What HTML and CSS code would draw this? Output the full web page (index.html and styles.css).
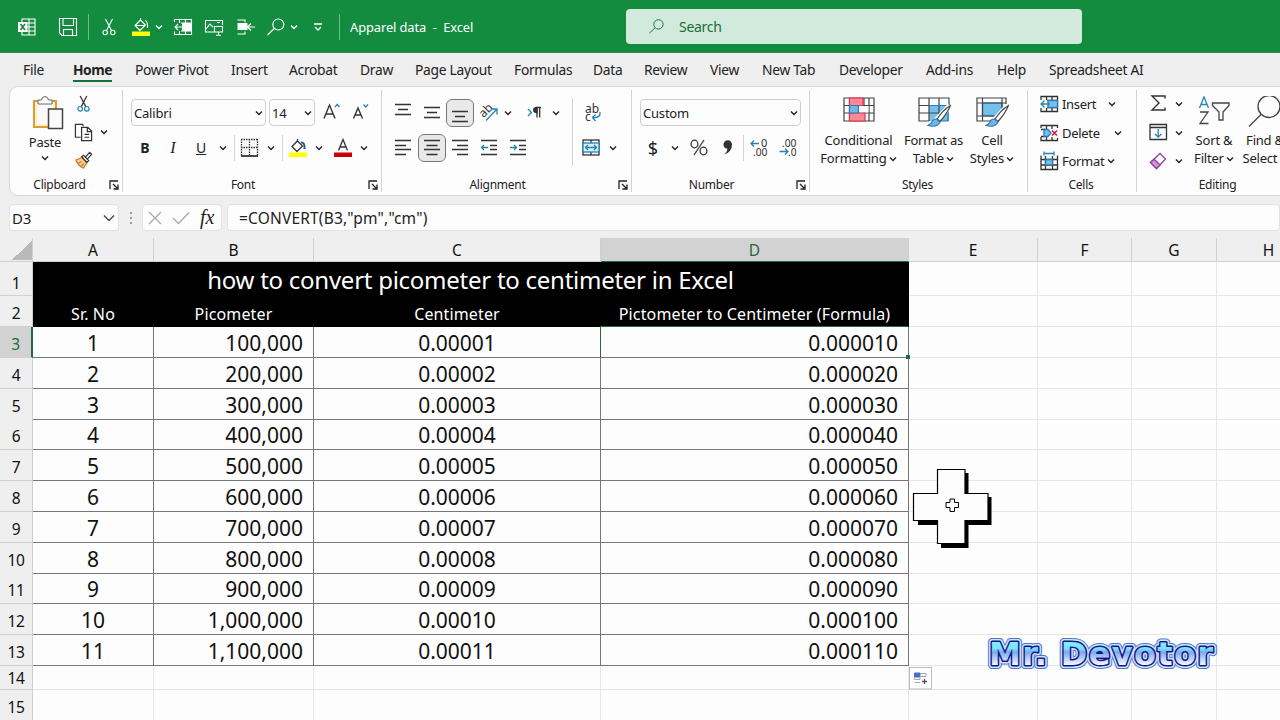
FILE: index.html
```html
<!DOCTYPE html>
<html lang="en">
<head>
    <meta charset="UTF-8">
    <meta name="viewport" content="width=device-width, initial-scale=1.0">
    <title>Apparel data - Excel</title>
    <link rel="stylesheet" href="styles.css">
</head>
<body>
    <svg class="symbols" width="0" height="0">
        <symbol id="chev" viewBox="0 0 8 8"><path d="M1 2.5 4 5.5 7 2.5" fill="none" stroke="currentColor" stroke-width="1.4"/></symbol>
        <symbol id="launch" viewBox="0 0 10 10"><path d="M1 9V1H9M4 4 8.5 8.5M9 4.500V9H4.500" fill="none" stroke="currentColor" stroke-width="1.3"/></symbol>
        <symbol id="lens" viewBox="0 0 20 20"><circle cx="12.300" cy="7.500" r="5.500"/><path d="M8.300 11.500 1.500 18"/></symbol>
    </svg>

    <div class="titlebar">
        <div class="quick">
            <svg class="icon" viewBox="0 0 20 20"><path d="M5 5V2H18V18H5V15M5 6H18M5 10H18M5 14H18M12 2V18"/><rect x="1" y="5" width="9.500" height="10" fill="#fff" stroke="none"/><path d="M3.500 7 8 13M8 7 3.500 13" stroke="#148c3f" stroke-width="1.700"/></svg>
            <svg class="icon" viewBox="0 0 20 20"><path d="M1.500 1.500H18.500V18.500H4L1.500 16ZM5 1.500V8.500H15.500V1.500M5.500 18V12.500H14.500V18"/></svg>
            <i class="line"></i>
            <svg class="icon" viewBox="0 0 20 20"><path d="M6.500 2 12.500 13.500M13.500 2 7.500 13.500"/><circle cx="6.200" cy="15.500" r="2.200"/><circle cx="13.800" cy="15.500" r="2.200"/></svg>
            <svg class="icon" viewBox="0 0 20 20"><path d="M4 8.500 9.500 3 14.500 8 9 13.500ZM9.500 3V1M4 8.500H14M14 3.500Q17 4 16.500 11"/><rect x="1" y="14.500" width="18" height="4.500" fill="#ff0" stroke="none"/></svg>
            <svg class="chev"><use href="#chev"/></svg>
            <svg class="icon" viewBox="0 0 20 20"><path d="M1.500 5V2.500H18.500V17.500H1.500V14.500M6.500 2.500V6M12.500 2.500V6M6.500 14V17.500M12.500 14V17.500M8 6H18M8 14H18M2 10H10M5 7 2 10 5 13"/><rect x="9" y="6" width="9" height="8" fill="#fff" stroke="none"/></svg>
            <svg class="icon" viewBox="0 0 20 20"><path d="M10 15H1.500V3.500H18.500V8M2 12 6 7 9 10M13 5.500H16M10.500 9.500H18.500V15H10.500ZM14.500 15V18M12 18.300H17"/></svg>
            <svg class="icon" viewBox="0 0 20 20"><path d="M1.500 3H9V5.500M1.500 17H9V14.500M12 10H19M15 6.500 11.500 10 15 13.500"/><rect x="1.500" y="6" width="10" height="7" fill="#fff" stroke="none"/></svg>
            <svg class="icon"><use href="#lens"/></svg>
            <svg class="chev"><use href="#chev"/></svg>
            <svg class="chev" viewBox="0 0 8 8"><path d="M0 1H8M1 4 4 7 7 4" fill="none" stroke="currentColor" stroke-width="1.300"/></svg>
            <i class="line"></i>
            <span class="doc">Apparel data&nbsp; -&nbsp; Excel</span>
        </div>
        <div class="search">
            <svg class="icon"><use href="#lens"/></svg>
            <span>Search</span>
        </div>
    </div>

    <div class="tabs">
        <span>File</span><span class="active">Home</span><span>Power Pivot</span><span>Insert</span><span>Acrobat</span><span>Draw</span><span>Page Layout</span><span>Formulas</span><span>Data</span><span>Review</span><span>View</span><span>New Tab</span><span>Developer</span><span>Add-ins</span><span>Help</span><span>Spreadsheet AI</span>
    </div>

    <div class="ribbon">
        <div class="group clipboard">
            <div class="body">
                <div class="paste">
                    <svg width="32" height="36" viewBox="0 0 32 36" fill="none">
                        <path d="M2 6H24V32H2Z" fill="#fdf0c4" stroke="#e09a35" stroke-width="2"/>
                        <path d="M5 8H21V29H5Z" fill="#fafafa"/>
                        <path d="M6 9V5H9.500Q10 1.500 13 1.500T16.500 5H20V9Z" fill="#fff" stroke="#666"/>
                        <rect x="16.500" y="14" width="14" height="19.500" fill="#fafafa" stroke="#444" stroke-width="1.500"/>
                    </svg>
                    <span>Paste</span>
                    <svg class="chev"><use href="#chev"/></svg>
                </div>
                <div class="clip-tools">
                    <svg class="icon" viewBox="0 0 20 20"><path d="M6.500 1 12.500 12.500M13.500 1 7.500 12.500"/><g class="blue"><circle cx="6.500" cy="14.500" r="2.400"/><circle cx="13.500" cy="14.500" r="2.400"/></g></svg>
                    <span></span>
                    <svg class="icon" viewBox="0 0 20 20"><path d="M7 15H1.500V1.500H9L10 3M8 4.500H14.500L18.500 8.500V18.500H8ZM14 5V9H18M11 12H16M11 15H16"/></svg>
                    <svg class="chev"><use href="#chev"/></svg>
                    <svg class="icon" viewBox="0 0 20 20"><path d="M2 9.500 8 7 13.500 12.500 10 18Q4 15.500 2 9.500Z" fill="#f8d091" stroke="#c9782e"/><path d="M5 12.500 8 11M8 15.500 10.500 13" stroke="#c9782e"/><path d="M8 6 10 4.500 15.500 10 13.500 12ZM12 6.500 16.500 1.500 18.500 3.500 14 8.500"/></svg>
                </div>
            </div>
            <div class="label"><span>Clipboard</span><svg class="launch"><use href="#launch"/></svg></div>
        </div>

        <div class="group font">
            <div class="body rows">
                <div class="row-a">
                    <div class="select"><span>Calibri</span><svg class="chev"><use href="#chev"/></svg></div>
                    <div class="select"><span>14</span><svg class="chev"><use href="#chev"/></svg></div>
                    <svg class="icon" viewBox="0 0 20 20"><path d="M2 15.500 7.500 2 13 15.500M4 11H11" stroke-width="1.400"/><path class="blue" d="M13 4 15.300 1.500 17.500 4"/></svg>
                    <svg class="icon" viewBox="0 0 20 20"><path d="M2.500 15.500 7 5 11.500 15.500M4 12H10" stroke-width="1.400"/><path class="blue" d="M12.500 1.500 14.800 4 17 1.500"/></svg>
                </div>
                <div class="row-b">
                    <b class="glyph">B</b>
                    <i class="glyph serif">I</i>
                    <u class="glyph">U</u>
                    <svg class="chev"><use href="#chev"/></svg>
                    <i class="line"></i>
                    <svg class="icon" viewBox="0 0 20 20"><path d="M2.500 1V18M10.500 1V18M18.500 1V18M2 1.500H19M2 9.500H19" stroke-dasharray="1.500 1"/><path d="M2 18H19" stroke-width="1.800"/></svg>
                    <svg class="chev"><use href="#chev"/></svg>
                    <i class="line"></i>
                    <svg class="icon" viewBox="0 0 20 20"><path d="M4 8.500 9.500 3 14.500 8 9 13.500ZM9.500 3V1"/><path d="M13 4.500Q17 4 16.500 11" stroke="#2a5c94" stroke-width="2"/><rect x="1" y="14.500" width="18" height="4.500" fill="#ff0" stroke="none"/></svg>
                    <svg class="chev"><use href="#chev"/></svg>
                    <svg class="icon" viewBox="0 0 20 20"><path d="M5.500 12.500 10 1.500 14.500 12.500M7 9H13"/><rect x="1" y="14.500" width="18" height="4.500" fill="#c8000a" stroke="none"/></svg>
                    <svg class="chev"><use href="#chev"/></svg>
                </div>
            </div>
            <div class="label"><span>Font</span><svg class="launch"><use href="#launch"/></svg></div>
        </div>

        <div class="group alignment">
            <div class="body">
                <div class="rows align-main">
                    <div class="row-a">
                        <svg class="icon" viewBox="0 0 20 20"><path d="M2 1.500H18M5 6.500H15M2 11.500H18"/></svg>
                        <svg class="icon" viewBox="0 0 20 20"><path d="M2 4.500H18M5 9.500H15M2 14.500H18"/></svg>
                        <svg class="icon pressed" viewBox="0 0 20 20"><path d="M2 8.500H18M5 13.500H15M2 18.500H18"/></svg>
                        <svg class="icon" viewBox="0 0 20 20"><text x="-4" y="14" transform="translate(3 -4) rotate(-45 5 10)" font-size="12">ab</text><path class="blue" d="M7 17.500 18 6M12.500 6H18V11.500"/></svg>
                        <svg class="chev"><use href="#chev"/></svg>
                        <svg class="icon" viewBox="0 0 20 20"><path class="blue" d="M3 6 6.500 9.500 3 13"/><path d="M12 14.500V4.500H16M14.700 4.500V14.500"/><path d="M12 4.500Q8.700 4.500 8.700 7T12 9.500Z" fill="#333"/></svg>
                        <svg class="chev"><use href="#chev"/></svg>
                    </div>
                    <div class="row-b">
                        <svg class="icon" viewBox="0 0 20 20"><path d="M2 2.500H18M2 7.500H13M2 11.500H18M2 16.500H13"/></svg>
                        <svg class="icon pressed" viewBox="0 0 20 20"><path d="M2 2.500H18M4.500 7.500H15.500M2 11.500H18M4.500 16.500H15.500"/></svg>
                        <svg class="icon" viewBox="0 0 20 20"><path d="M2 2.500H18M7 7.500H18M2 11.500H18M7 16.500H18"/></svg>
                        <svg class="icon" viewBox="0 0 20 20"><path d="M2 2.500H18M11 7.500H18M11 11.500H18M2 16.500H18"/><path class="blue" d="M2.500 9.500H9M5 7 2.500 9.500 5 12"/></svg>
                        <svg class="icon" viewBox="0 0 20 20"><path d="M2 2.500H18M11 7.500H18M11 11.500H18M2 16.500H18"/><path class="blue" d="M2 9.500H8.500M6 7 8.500 9.500 6 12"/></svg>
                    </div>
                </div>
                <i class="line tall"></i>
                <div class="rows align-side">
                    <div class="row-a">
                        <svg class="icon" viewBox="0 0 20 20"><text x="2" y="9.500" font-size="12">ab</text><text x="2" y="17.500" font-size="12">c</text><path class="blue" d="M17 9Q18 15 10 14.500M12.500 11.500 9.500 14.500 12.500 18"/></svg>
                    </div>
                    <div class="row-b">
                        <svg class="icon" viewBox="0 0 20 20"><rect x="2" y="2" width="16" height="15" fill="#fff"/><path d="M10 2V5M10 14V17"/><rect x="2" y="5" width="16" height="9" fill="#d8effb" stroke="#2484b4"/><path class="blue" d="M4.500 9.500H15.500M7 7 4.500 9.500 7 12M13 7 15.500 9.500 13 12"/></svg>
                        <svg class="chev"><use href="#chev"/></svg>
                    </div>
                </div>
            </div>
            <div class="label"><span>Alignment</span><svg class="launch"><use href="#launch"/></svg></div>
        </div>

        <div class="group number">
            <div class="body rows">
                <div class="row-a">
                    <div class="select"><span>Custom</span><svg class="chev"><use href="#chev"/></svg></div>
                </div>
                <div class="row-b">
                    <span class="glyph big">$</span>
                    <svg class="chev"><use href="#chev"/></svg>
                    <svg class="icon" viewBox="0 0 20 20"><ellipse cx="5.500" cy="6" rx="3.400" ry="3.800"/><ellipse cx="14.500" cy="13" rx="3.400" ry="3.800"/><path d="M15 2 5 17"/></svg>
                    <svg class="icon" viewBox="0 0 20 20"><path d="M5.500 6.500A4.200 4.200 0 0 1 14 6.500Q14 14 6 16.500Q9.500 13.500 9.500 10.700Q5.500 10.500 5.500 6.500Z" fill="#333" stroke="none"/></svg>
                    <i class="line"></i>
                    <svg class="icon" viewBox="0 0 20 20"><text x="11" y="8.500" font-size="11">0</text><text x="3" y="17.500" font-size="11" textLength="14.500" lengthAdjust="spacingAndGlyphs">.00</text><path class="blue" d="M1 5.500H9M4 2.500 1 5.500 4 8.500"/></svg>
                    <svg class="icon" viewBox="0 0 20 20"><text x="3" y="8.500" font-size="11" textLength="14.500" lengthAdjust="spacingAndGlyphs">.00</text><text x="9" y="17.500" font-size="11" textLength="8.500" lengthAdjust="spacingAndGlyphs">.0</text><path class="blue" d="M.5 13.500H9M6 10.500 9 13.500 6 16.500"/></svg>
                </div>
            </div>
            <div class="label"><span>Number</span><svg class="launch"><use href="#launch"/></svg></div>
        </div>

        <div class="group styles">
            <div class="body">
                <div class="big-btn">
                    <svg width="34" height="32" viewBox="0 0 34 32" fill="none" stroke="#444" stroke-width="1.200">
                        <path d="M2 2H32V25H2ZM2 9.500H32M2 17H32M7.500 2V25M22 2V25M27 2V25"/>
                        <path d="M7.500 2H21V9.500H7.500ZM7.500 17H23V25H7.500Z" fill="#ff8795" stroke="#d8354c"/>
                        <path d="M7.500 9.500H16.500V17H7.500Z" fill="#73b7e5" stroke="#2c79b5"/>
                        <path d="M17.500 10.200H26.500V16.300H17.500Z" fill="#fdfdfd" stroke="none"/>
                    </svg>
                    <span>Conditional</span>
                    <span>Formatting <svg class="chev"><use href="#chev"/></svg></span>
                </div>
                <div class="big-btn">
                    <svg width="34" height="32" viewBox="0 0 34 32" fill="none" stroke="#444" stroke-width="1.200">
                        <path d="M12 9.500H32V25H12Z" fill="#73c0ee" stroke="none"/>
                        <path d="M32 9V2H2V25H12M2 9.500H32M2 17H28M12 2V25M22 2V20"/>
                        <path d="M12 9.500H31V25H24" stroke="#2c79b5"/>
                        <path d="M33 10 18 26" stroke="#fff" stroke-width="6"/>
                        <path d="M33.500 9.500Q26 14 20 23L23 25.500Q30 18 33.500 9.500Z" fill="#fff"/>
                        <path d="M19.500 23Q15.500 23 14.500 27L11 29.500Q20 32 23 26Z" fill="#73b7e5" stroke="#2c79b5"/>
                    </svg>
                    <span>Format as</span>
                    <span>Table <svg class="chev"><use href="#chev"/></svg></span>
                </div>
                <div class="big-btn">
                    <svg width="34" height="32" viewBox="0 0 34 32" fill="none" stroke="#444" stroke-width="1.200">
                        <path d="M7.500 7H27V20H7.500Z" fill="#73c0ee" stroke="#2c79b5"/>
                        <path d="M31 8V2H2V25H18M2 7H31M2 20H22M7.500 2V25M27 2V12"/>
                        <path d="M33 10 18 26" stroke="#fff" stroke-width="6"/>
                        <path d="M33.500 9.500Q26 14 20 23L23 25.500Q30 18 33.500 9.500Z" fill="#fff"/>
                        <path d="M19.500 23Q15.500 23 14.500 27L11 29.500Q20 32 23 26Z" fill="#73b7e5" stroke="#2c79b5"/>
                    </svg>
                    <span>Cell</span>
                    <span>Styles <svg class="chev"><use href="#chev"/></svg></span>
                </div>
            </div>
            <div class="label"><span>Styles</span></div>
        </div>

        <div class="group cells">
            <div class="body">
                <div class="cell-btn">
                    <svg class="icon" viewBox="0 0 20 20"><path d="M2 6V2.500H18.500V17.500H2V14M7.500 2.500V6M13 2.500V17.500M7.500 14V17.500M8 6.500H18M8 13.500H18"/><rect x="9" y="6.500" width="9.500" height="7" fill="#73c0ee" stroke="#2c79b5"/><path class="blue" d="M2 10H11M5.500 6.500 2 10 5.500 13.500"/></svg>
                    <span>Insert</span><svg class="chev"><use href="#chev"/></svg>
                </div>
                <div class="cell-btn delete">
                    <svg class="icon" viewBox="0 0 20 20"><path d="M2 5V2.500H18.500V5M2 14V17.500H18.500V15M7.500 2.500V6M13 2.500V6M7.500 14V17.500M13 14V17.500M2 6.500H6M2 13.500H6"/><path d="M5 6.500H9L12 10 9 13.500H5Z" fill="#73c0ee" stroke="#2c79b5"/><path d="M13 7.500 18 12.500M18 7.500 13 12.500" stroke="#d5203b" stroke-width="1.600"/></svg>
                    <span>Delete</span><svg class="chev"><use href="#chev"/></svg>
                </div>
                <div class="cell-btn format">
                    <svg class="icon" viewBox="0 0 20 20"><path d="M2 4.500V18.500H18.500V4.500M2 8.500H18M2 14H18M6.500 5V18M13.500 5V18"/><path d="M6.500 8.500H13.500V14H6.500Z" fill="#73c0ee" stroke="#2c79b5"/><path class="blue" d="M5 2.500H15M5 .5V4.500M15 .5V4.500"/></svg>
                    <span>Format</span><svg class="chev"><use href="#chev"/></svg>
                </div>
            </div>
            <div class="label"><span>Cells</span></div>
        </div>

        <div class="group editing">
            <div class="body">
                <div class="edit-tools">
                    <svg class="icon" viewBox="0 0 20 20"><path d="M17 4.500V2H4L11 9 4 16H17V13.500" stroke-width="1.400"/></svg>
                    <svg class="chev"><use href="#chev"/></svg>
                    <svg class="icon" viewBox="0 0 20 20"><path d="M2 1.500H18.500V16.500H2ZM2 4.500H18.500"/><path class="blue" d="M10.200 6V14M7 11 10.200 14 13.400 11"/></svg>
                    <svg class="chev"><use href="#chev"/></svg>
                    <svg class="icon" viewBox="0 0 20 20"><path d="M2.500 11.500 12 2.500 17.500 8 8.500 17.500Z" stroke="#8a4596"/><path d="M2.500 11.500 6 8.200 12 14 8.500 17.500Z" fill="#dd8fe0" stroke="#8a4596"/></svg>
                    <svg class="chev"><use href="#chev"/></svg>
                </div>
                <div class="big-btn sort">
                    <svg width="34" height="32" viewBox="0 0 34 32" fill="none" stroke="#444" stroke-width="1.300">
                        <path d="M2.500 12 7 1 11.500 12M4 8.500H10" stroke="#2484b4"/>
                        <path d="M3 16H11L3 27.500H11.500"/>
                        <path d="M15.500 7H32V9.500L26 16V24H22V16L15.500 9.500Z"/>
                    </svg>
                    <span>Sort &amp;</span>
                    <span>Filter <svg class="chev"><use href="#chev"/></svg></span>
                </div>
                <div class="big-btn find">
                    <svg width="40" height="32" viewBox="0 0 40 32" fill="none" stroke="#444" stroke-width="1.300">
                        <circle cx="24" cy="10.500" r="11"/><path d="M16 18.500 4 30.500"/>
                    </svg>
                    <span>Find &amp;</span>
                    <span>Select <svg class="chev"><use href="#chev"/></svg></span>
                </div>
            </div>
            <div class="label"><span>Editing</span></div>
        </div>
    </div>

    <div class="formula-bar">
        <div class="name-box"><span>D3</span><svg width="12" height="8" viewBox="0 0 12 8"><path d="M1 1.500 6 6.500 11 1.500"/></svg></div>
        <svg class="dots" width="4" height="12" viewBox="0 0 4 12"><path d="M1 0H3V2H1ZM1 5H3V7H1ZM1 10H3V12H1Z"/></svg>
        <div class="fx-box">
            <svg width="14" height="14" viewBox="0 0 14 14"><path d="M1 1 13 13M13 1 1 13"/></svg>
            <svg width="18" height="14" viewBox="0 0 18 14"><path d="M1 7 6.500 12.500 17 1.500"/></svg>
            <em>fx</em>
        </div>
        <div class="formula">=CONVERT(B3,"pm","cm")</div>
    </div>

    <div class="sheet" id="sheet">
        <div class="sheet-row heads">
            <div class="corner"></div><div>A</div><div>B</div><div>C</div><div class="on">D</div><div>E</div><div>F</div><div>G</div><div>H</div>
        </div>
        <div class="sheet-row title">
            <div class="num">1</div><div class="merged">how to convert picometer to centimeter in Excel</div><div></div><div></div><div></div><div></div>
        </div>
        <div class="sheet-row names">
            <div class="num">2</div><div>Sr. No</div><div>Picometer</div><div>Centimeter</div><div>Pictometer to Centimeter (Formula)</div><div></div><div></div><div></div><div></div>
        </div>
    </div>

    <svg class="cursor" width="82" height="82" viewBox="0 0 82 82">
        <path d="M30 5H56.500V29H79.500V57H56.500V80H29V75H30V57H6V53H30Z"/>
        <path d="M25.500 1.500H53V25.500H76V52.500H53V75.500H25.500V52.500H1.500V25.500H25.500Z" fill="#fdfdfd" stroke="#000" stroke-width="1.200"/>
        <path d="M38 31H42.500V34.500H46.500V39.500H42.500V43.500H38V39.500H34V34.500H38Z" fill="#fff" stroke="#000"/>
    </svg>

    <svg class="fill-options" width="24" height="23" viewBox="0 0 24 23">
        <rect x=".5" y=".5" width="22" height="21.500" fill="#fdfdfd" stroke="#bbb"/>
        <path d="M5.500 6H11V10H5.500Z" fill="#4870c0" stroke="#4870c0"/>
        <path d="M11.500 6.500H17V9.500H11.500M5.500 10V12.500H11V10M5.500 15.500H11" fill="none" stroke="#9aa"/>
        <path d="M15.500 12V17M13 14.500H18" stroke="#555" stroke-width="1.300"/>
    </svg>

    <svg class="watermark" width="240" height="44" viewBox="0 0 240 44">
        <defs>
            <linearGradient id="ice" gradientUnits="userSpaceOnUse" x1="0" y1="8" x2="0" y2="33">
                <stop offset="0" stop-color="#7ff4ff"/>
                <stop offset=".3" stop-color="#7ce0fa"/>
                <stop offset=".45" stop-color="#7fa9ea"/>
                <stop offset="1" stop-color="#fff"/>
            </linearGradient>
        </defs>
        <g class="word">
            <text class="w1" x="8" y="32" textLength="224">Mr. Devotor</text>
            <text class="w2" x="8" y="32" textLength="224">Mr. Devotor</text>
            <text class="w3" x="8" y="32" textLength="224">Mr. Devotor</text>
            <text class="w4" x="8" y="32" textLength="224">Mr. Devotor</text>
        </g>
    </svg>

    <script>
        const sheet = document.getElementById('sheet');

        function addRow(num, cells, cls) {
            const row = document.createElement('div');
            row.className = 'sheet-row ' + cls;
            row.innerHTML = `<div class="num">${num}</div>` +
                cells.map(c => `<div>${c}</div>`).join('');
            sheet.appendChild(row);
            return row;
        }

        // Data rows 3 - 13
        for (let i = 1; i <= 11; i++) {
            const row = addRow(i + 2, [
                i,
                (i * 100000).toLocaleString('en-US'),
                (i / 100000).toFixed(5),
                (i / 100000).toFixed(6),
                '', '', '', ''
            ], 'data');
            if (i === 1) row.classList.add('selected');
        }

        // Empty rows
        addRow(14, Array(8).fill(''), 'short');
        addRow(15, Array(8).fill(''), 'blank');
    </script>
</body>
</html>
```

FILE: styles.css
```css
* {
    box-sizing: border-box;
}

body {
    margin: 0;
    width: 1280px;
    height: 720px;
    overflow: hidden;
    position: relative;
    background: #efefef;
    color: #222;
    font-family: "Noto Sans", "Open Sans", sans-serif;
    font-size: 13px;
}

svg {
    display: block;
    flex-shrink: 0;
}

.symbols {
    position: absolute;
}

.icon {
    width: 20px;
    height: 20px;
    fill: none;
    stroke: #333;
    stroke-width: 1.3;
    overflow: visible;
}

.icon text {
    fill: #333;
    stroke: none;
}

.blue {
    stroke: #2484b4;
}

.chev {
    width: 8px;
    height: 8px;
}

.line {
    width: 1px;
    height: 26px;
    background: #d4d4d4;
}

/* title bar */
.titlebar {
    display: flex;
    height: 53px;
    padding-left: 17px;
    background: #148c3f;
    border-bottom: 1px solid #3d7f55;
    color: #fff;
}

.quick {
    display: grid;
    grid-template-columns: 41px 30px 11px 32px 24px 18px 31px 32px 30px 24px 24px 25px 11px 276px;
    align-items: center;
    height: 53px;
}

.titlebar .icon {
    stroke: #fff;
    stroke-width: 1.1;
}

.titlebar .line {
    background: #6fbb89;
}

.doc {
    padding-top: 1px;
    font-size: 12.9px;
    letter-spacing: -0.1px;
    white-space: nowrap;
}

.search {
    display: flex;
    align-items: center;
    width: 456px;
    height: 35px;
    margin-top: 9px;
    padding-left: 22px;
    border-radius: 4px;
    background: #d1eadc;
    color: #1c6b3a;
    font-size: 14px;
    letter-spacing: -0.3px;
}

.search .icon {
    width: 17px;
    height: 17px;
    margin-right: 14px;
    stroke: #1c6b3a;
}

/* tabs */
.tabs {
    display: grid;
    grid-template-columns: 50px 62px 96px 58px 71px 55px 99px 79px 51px 66px 52px 77px 87px 71px 52px 110px;
    height: 33px;
    padding-left: 23px;
    font-size: 13.8px;
    letter-spacing: -0.28px;
    line-height: 34px;
    white-space: nowrap;
}

.tabs span {
    justify-self: start;
}

.tabs .active {
    height: 29px;
    border-bottom: 2px solid #11713a;
    font-weight: bold;
    letter-spacing: -0.5px;
}

/* ribbon */
.ribbon {
    display: flex;
    width: 1290px;
    height: 110px;
    margin-left: 9px;
    background: #fdfdfd;
    border: 1px solid #d8d8d8;
    border-radius: 9px;
}

.group {
    display: flex;
    flex-direction: column;
    flex-shrink: 0;
    border-right: 1px solid #d4d4d4;
    height: 102px;
    margin-top: 3px;
}

.group .body {
    display: flex;
    flex-shrink: 0;
    height: 86px;
}

.group .label {
    display: flex;
    align-items: center;
    flex-shrink: 0;
    height: 17px;
    font-size: 12px;
    letter-spacing: -0.25px;
}

.label span {
    flex: 1;
    text-align: center;
}

.launch {
    width: 10px;
    height: 10px;
    margin-right: 3px;
}

.clipboard { width: 113px; }
.font { width: 259px; }
.alignment { width: 250px; }
.number { width: 178px; }
.styles { width: 218px; }
.cells { width: 109px; }
.editing { width: 162px; }

.font .label span,
.alignment .label span,
.number .label span {
    padding-right: 5px;
}

.styles .label,
.cells .label {
    padding-right: 2px;
}

.paste {
    display: flex;
    flex-direction: column;
    align-items: center;
    width: 42px;
    margin: 5px 0 0 14px;
    line-height: 20px;
    letter-spacing: -0.2px;
}

.paste svg:first-child {
    margin-left: 5px;
    margin-bottom: 1px;
}

.paste .chev {
    margin-top: 2px;
}

.clip-tools {
    display: grid;
    grid-template-columns: 26px 8px;
    grid-auto-rows: 28px;
    align-items: center;
    margin-left: 8px;
}

.clip-tools .icon {
    width: 19px;
    height: 19px;
}

.group .rows {
    display: flex;
    flex-direction: column;
    gap: 8px;
    padding-top: 9px;
}

.row-a,
.row-b {
    display: grid;
    align-items: center;
    height: 27px;
}

.font .rows { padding-left: 8px; }
.font .row-a { grid-template-columns: 138px 53px 29px 20px; }
.font .row-b { grid-template-columns: 28px 28px 28px 15px 5px 28px 15px 6px 27px 18px 27px 8px; padding-left: 4px; }

.select {
    display: flex;
    align-items: center;
    justify-content: space-between;
    height: 27px;
    padding: 0 2px 0 2px;
    border: 1px solid #d0d0d0;
    border-radius: 4px;
    letter-spacing: -0.2px;
}

.font .select { margin-right: 3px; }
.font .select + .select { margin-right: 7px; }

.glyph {
    width: 20px;
    text-align: center;
    font-size: 14px;
    line-height: 20px;
}

.serif {
    font-family: "Liberation Serif", serif;
    font-size: 16px;
}

.big {
    font-size: 18px;
}

.alignment .align-main { width: 190px; padding-left: 11px; }
.align-main .row-a { grid-template-columns: 29px 28px 29px 25px 21px 27px 8px; }
.align-main .row-b { grid-template-columns: 29px 28px 29px 29px 20px; }
.alignment .align-side { padding-left: 8px; }
.align-side .row-a { padding-left: 2px; }
.align-side .row-b { grid-template-columns: 28px 8px; }

.tall {
    height: 68px;
    margin-top: 8px;
}

.pressed {
    border-radius: 2px;
    background: #e9e9e9;
    outline: 1px solid #777;
    outline-offset: 3px;
    box-shadow: 0 0 0 3px #e9e9e9;
}

.number .rows { padding-left: 8px; }
.number .row-a { grid-template-columns: 161px; }
.number .row-b { grid-template-columns: 28px 18px 29px 25px 7px 29px 20px; padding-left: 3px; }

.styles .body {
    padding-left: 10px;
}

.big-btn {
    display: flex;
    flex-direction: column;
    align-items: center;
    width: 77px;
    padding-top: 6px;
    line-height: 18px;
    letter-spacing: -0.2px;
    white-space: nowrap;
}

.big-btn:nth-child(2) { width: 73px; }
.big-btn:nth-child(3) { width: 44px; }

.big-btn > svg {
    margin-bottom: 3px;
}

.big-btn .chev {
    display: inline-block;
    margin-left: -1px;
}

.cells .body {
    flex-direction: column;
    padding-left: 11px;
}

.cell-btn {
    display: grid;
    grid-template-columns: 23px 46px 8px;
    align-items: center;
    height: 28.5px;
    letter-spacing: -0.3px;
}

.cell-btn.delete { grid-template-columns: 23px 52px 8px; }
.cell-btn.format { grid-template-columns: 23px 45px 8px; }

.edit-tools {
    display: grid;
    grid-template-columns: 27px 8px;
    grid-auto-rows: 28.5px;
    align-items: center;
    margin-left: 11px;
}

.editing .sort { width: 44px; margin-left: 9px; }
.editing .find { width: 50px; margin-left: 4px; }

/* formula bar */
.formula-bar {
    display: flex;
    align-items: center;
    height: 27px;
    margin: 8px 0 7px 9px;
}

.name-box,
.fx-box,
.formula {
    display: flex;
    align-items: center;
    height: 27px;
    background: #fdfdfd;
    border: 1px solid #e2e2e2;
    border-radius: 4px;
}

.formula-bar svg {
    fill: none;
    stroke: #444;
    stroke-width: 1.3;
}

.formula-bar .dots {
    margin: 0 9px 0 10px;
    fill: #999;
    stroke: none;
}

.name-box {
    justify-content: space-between;
    width: 110px;
    padding: 0 3px 0 2px;
    font-size: 15px;
    letter-spacing: -0.2px;
}

.fx-box {
    gap: 10px;
    width: 80px;
    padding-left: 5px;
}

.fx-box svg {
    stroke: #aaa;
}

.fx-box em {
    font-family: "Liberation Serif", serif;
    font-size: 20px;
    line-height: 20px;
    margin-top: -2px;
}

.formula {
    flex: 1;
    margin-left: 5px;
    padding-left: 11px;
    font-size: 15.5px;
    letter-spacing: 0.18px;
}

/* sheet */
.sheet {
    color: #111;
}

.sheet-row {
    display: grid;
    grid-template-columns: 33px 121px 160px 287px 308px 129px 94px 85px 104px;
    width: 1321px;
    height: 30.8px;
    background: #fdfdfd;
}

.sheet-row > div {
    display: flex;
    align-items: center;
    justify-content: center;
    border-right: 1px solid #e6e6e6;
    border-bottom: 1px solid #e6e6e6;
}

.sheet-row .num {
    padding-top: 4px;
    background: #efefef;
    border-color: #d0d0d0;
    font-size: 15.5px;
    letter-spacing: -0.3px;
}

.heads {
    height: 24px;
}

.heads > div {
    background: #efefef;
    border-color: #d0d0d0;
    font-size: 15.5px;
}

.heads .corner {
    background: linear-gradient(135deg, #efefef 50%, #b9b9b9 50%) no-repeat 12px 2px / 20px 20px #efefef;
}

.heads .on {
    background: #d2d2d2;
    border-bottom: 1px solid #1d6b40;
    color: #1d6b40;
}

.title {
    height: 34px;
}

.title .num {
    padding-top: 8px;
}

.title .merged {
    grid-column: 2 / 6;
    padding-top: 3px;
    background: #000;
    border-color: #000;
    color: #fff;
    font-size: 24px;
    line-height: 28px;
    letter-spacing: -0.26px;
}

.names {
    height: 31px;
}

.names > div:nth-child(n+2):nth-child(-n+5) {
    padding-top: 5px;
    background: #000;
    border-color: #000;
    color: #fff;
    font-size: 16px;
    letter-spacing: 0.14px;
}

.data > div:nth-child(n+2):nth-child(-n+5) {
    padding-top: 2px;
    border-color: #777;
    font-size: 21px;
}

.data > div:nth-child(3),
.data > div:nth-child(5) {
    justify-content: flex-end;
    padding-right: 10px;
}

.selected .num {
    background: #d2d2d2;
    border-right: 2px solid #1d6b40;
    color: #1d6b40;
}

.selected > div:nth-child(5) {
    position: relative;
    z-index: 1;
    border-color: #1d6b40;
    box-shadow: -1px -1px 0 #1d6b40;
}

.selected > div:nth-child(5)::after {
    content: "";
    position: absolute;
    right: -2px;
    bottom: -2px;
    width: 4px;
    height: 4px;
    background: #1d6b40;
}

.short {
    height: 24.5px;
}

.short .num {
    padding-top: 1px;
}

/* things floating over the sheet */
.cursor {
    position: absolute;
    left: 912px;
    top: 468px;
}

.fill-options {
    position: absolute;
    left: 909px;
    top: 667px;
}

.watermark {
    position: absolute;
    left: 981px;
    top: 633px;
}

.word {
    font-family: "DejaVu Sans", sans-serif;
    font-size: 32px;
    font-weight: bold;
    stroke-linejoin: round;
}

.w1 { fill: none; stroke: #4a78cc; stroke-width: 8px; }
.w2 { fill: none; stroke: #cfe4ff; stroke-width: 6px; }
.w3 { fill: none; stroke: #15158a; stroke-width: 3px; }
.w4 { fill: url(#ice); }
```
